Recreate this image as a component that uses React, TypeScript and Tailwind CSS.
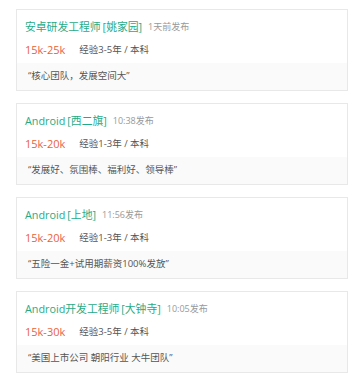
import React from "react";

type Job = {
  title: string;
  area: string;
  time: string;
  salary: string;
  exp: string;
  quote: string;
};

const jobs: Job[] = [
  { title: "安卓研发工程师", area: "姚家园", time: "1天前发布", salary: "15k-25k", exp: "经验3-5年 / 本科", quote: "“核心团队，发展空间大”" },
  { title: "Android", area: "西二旗", time: "10:38发布", salary: "15k-20k", exp: "经验1-3年 / 本科", quote: "“发展好、氛围棒、福利好、领导棒”" },
  { title: "Android", area: "上地", time: "11:56发布", salary: "15k-20k", exp: "经验1-3年 / 本科", quote: "“五险一金+试用期薪资100%发放”" },
  { title: "Android开发工程师", area: "大钟寺", time: "10:05发布", salary: "15k-30k", exp: "经验3-5年 / 本科", quote: "“美国上市公司 朝阳行业 大牛团队”" },
];

export default function App() {
  return (
    <div
      className="w-[350px] h-[376px] bg-white overflow-hidden pt-[9px] flex flex-col gap-[12px]"
      style={{ fontFamily: '"Open Sans", "Noto Sans CJK SC", sans-serif' }}
    >
      {jobs.map((j, i) => (
        <div key={i} className="ml-[16px] w-[332px] border border-[#e8e8e8] flex flex-col shrink-0">
          <div className="pl-[8px] pt-[7px] flex items-center h-[27px] whitespace-nowrap">
            <span className="text-[10.8px] leading-[20px] text-[#1fab87]">{j.title}</span>
            <span className="ml-[2px] text-[10.8px] leading-[20px] text-[#1fab87]">[{j.area}]</span>
            <span className="ml-[6px] text-[9px] leading-[20px] text-[#999999]">{j.time}</span>
          </div>
          <div className="pl-[8px] mt-[3px] flex items-center h-[20px] whitespace-nowrap">
            <span className="text-[11px] leading-[20px] text-[#eb5f3a]">{j.salary}</span>
            <span className="ml-[14px] text-[9.5px] leading-[20px] text-[#555555]">{j.exp}</span>
          </div>
          <div className="mt-[3px] h-[27px] bg-[#fafafa] flex items-center pl-[11px] whitespace-nowrap">
            <span className="text-[9.5px] text-[#555555]">{j.quote}</span>
          </div>
        </div>
      ))}
    </div>
  );
}
